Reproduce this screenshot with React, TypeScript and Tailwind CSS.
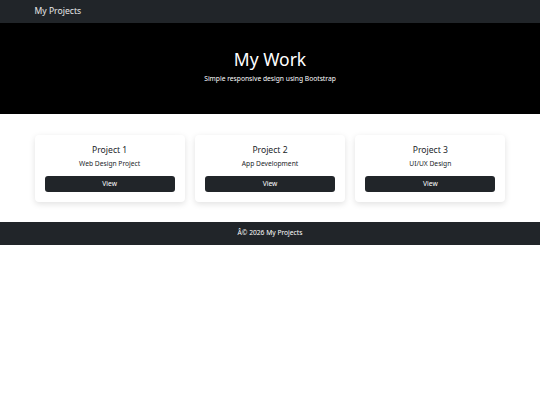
const projects = [
  { title: 'Project 1', desc: 'Web Design Project' },
  { title: 'Project 2', desc: 'App Development' },
  { title: 'Project 3', desc: 'UI/UX Design' },
];

export default function App() {
  return (
    <div className="min-h-[405px] bg-white font-['Noto_Sans',sans-serif]">
      <nav className="h-[23px] bg-[#212529] flex items-center">
        <div className="w-[471px] mx-auto text-[8.6px] text-white/90">My Projects</div>
      </nav>

      <header className="h-[91px] bg-black text-white text-center flex flex-col items-center pt-[24px]">
        <h1 className="text-[17.5px] leading-[24px]">My Work</h1>
        <p className="text-[6.7px] leading-[9px] mt-[3px]">Simple responsive design using Bootstrap</p>
      </header>

      <main className="w-[471px] mx-auto pt-[21px] pb-[20px] grid grid-cols-3 gap-[10px]">
        {projects.map((p) => (
          <div
            key={p.title}
            className="bg-white rounded-[4px] shadow-[0_2px_6px_rgba(0,0,0,0.12)] px-[10px] pt-[9px] pb-[10px] text-center"
          >
            <h5 className="text-[8.6px] leading-[12px] text-[#212529]">{p.title}</h5>
            <p className="text-[6.7px] leading-[9px] text-[#212529] mt-[3px]">{p.desc}</p>
            <button className="mt-[6px] w-full h-[16px] rounded-[3px] bg-[#212529] text-white text-[6.7px] leading-[16px]">
              View
            </button>
          </div>
        ))}
      </main>

      <footer className="h-[23px] bg-[#212529] text-white flex items-center justify-center text-[6.7px]">
        Â© 2026 My Projects
      </footer>
    </div>
  );
}
